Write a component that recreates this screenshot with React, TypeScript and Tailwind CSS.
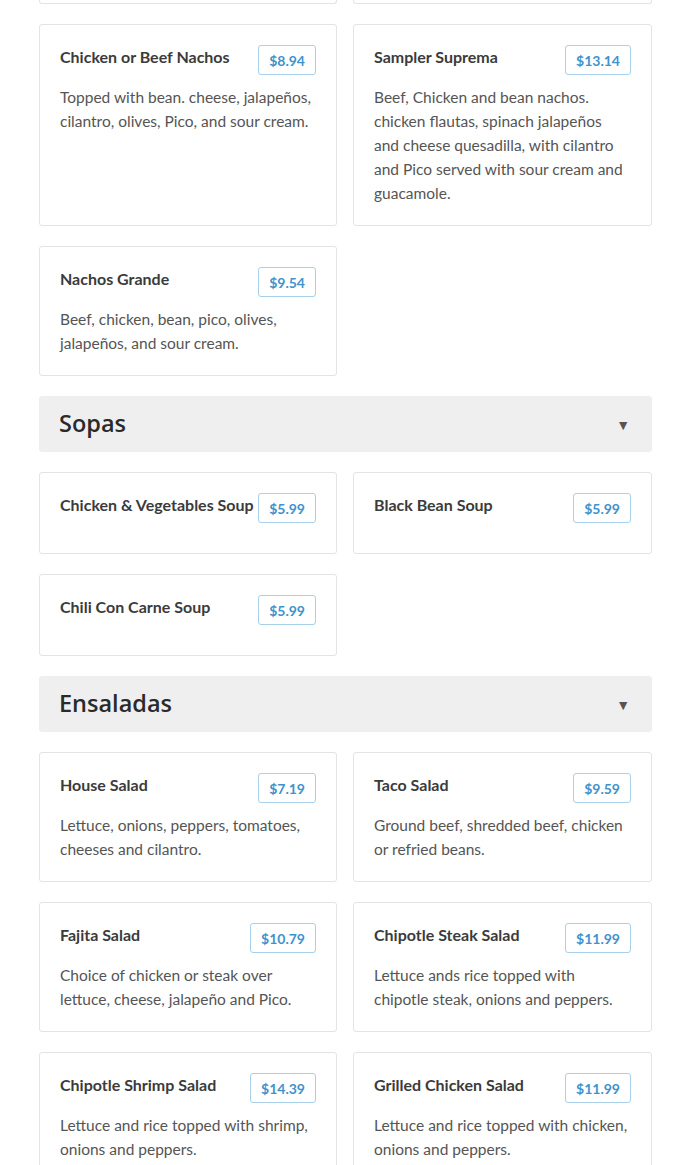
type Item = { name: string; price: string; desc?: string };

const nachos: Item[] = [
  {
    name: "Chicken or Beef Nachos",
    price: "$8.94",
    desc: "Topped with bean. cheese, jalapeños, cilantro, olives, Pico, and sour cream.",
  },
  {
    name: "Sampler Suprema",
    price: "$13.14",
    desc: "Beef, Chicken and bean nachos. chicken flautas, spinach jalapeños and cheese quesadilla, with cilantro and Pico served with sour cream and guacamole.",
  },
  {
    name: "Nachos Grande",
    price: "$9.54",
    desc: "Beef, chicken, bean, pico, olives, jalapeños, and sour cream.",
  },
];

const sopas: Item[] = [
  { name: "Chicken & Vegetables Soup", price: "$5.99" },
  { name: "Black Bean Soup", price: "$5.99" },
  { name: "Chili Con Carne Soup", price: "$5.99" },
];

const ensaladas: Item[] = [
  {
    name: "House Salad",
    price: "$7.19",
    desc: "Lettuce, onions, peppers, tomatoes, cheeses and cilantro.",
  },
  {
    name: "Taco Salad",
    price: "$9.59",
    desc: "Ground beef, shredded beef, chicken or refried beans.",
  },
  {
    name: "Fajita Salad",
    price: "$10.79",
    desc: "Choice of chicken or steak over lettuce, cheese, jalapeño and Pico.",
  },
  {
    name: "Chipotle Steak Salad",
    price: "$11.99",
    desc: "Lettuce ands rice topped with chipotle steak, onions and peppers.",
  },
  {
    name: "Chipotle Shrimp Salad",
    price: "$14.39",
    desc: "Lettuce and rice topped with shrimp, onions and peppers.",
  },
  {
    name: "Grilled Chicken Salad",
    price: "$11.99",
    desc: "Lettuce and rice topped with chicken, onions and peppers.",
  },
];

function MenuCard({ item }: { item: Item }) {
  return (
    <div className="rounded-[3px] border border-[#e4e4e4] bg-white p-5">
      <div className="mb-[10px] flex items-start justify-between gap-1">
        <h3 className="text-[16px] leading-6 font-bold text-[#3b3b3b]">{item.name}</h3>
        <span className="flex h-[30px] shrink-0 items-center rounded-[3px] border border-[#a9d0ea] px-[10px] text-[14px] font-bold text-[#3f93cc]">
          {item.price}
        </span>
      </div>
      {item.desc && (
        <p className="pr-[3px] text-[15.5px] leading-6 text-[#555]">{item.desc}</p>
      )}
    </div>
  );
}

function SectionHeader({ title }: { title: string }) {
  return (
    <div className="flex h-14 items-center justify-between rounded-[3px] bg-[#efefef] px-5">
      <h2
        className="text-[23.5px] font-semibold text-[#2a2a2a]"
        style={{ fontFamily: '"Open Sans", sans-serif' }}
      >
        {title}
      </h2>
      <span className="mr-[2px] text-[14px] text-[#555]">▼</span>
    </div>
  );
}

function CardGrid({ items }: { items: Item[] }) {
  return (
    <div className="grid grid-cols-[298px_1fr] gap-x-4 gap-y-5">
      {items.map((item) => (
        <MenuCard key={item.name} item={item} />
      ))}
    </div>
  );
}

export default function App() {
  return (
    <div
      className="min-h-[1165px] overflow-hidden bg-white pr-[38px] pl-[39px]"
      style={{ fontFamily: "Lato, sans-serif" }}
    >
      <div className="flex flex-col gap-5">
        <div className="grid grid-cols-[298px_1fr] gap-x-4">
          <div className="h-1 rounded-b-[3px] border-x border-b border-[#e4e4e4]" />
          <div className="h-1 rounded-b-[3px] border-x border-b border-[#e4e4e4]" />
        </div>
        <CardGrid items={nachos} />
        <SectionHeader title="Sopas" />
        <CardGrid items={sopas} />
        <SectionHeader title="Ensaladas" />
        <CardGrid items={ensaladas} />
      </div>
    </div>
  );
}
